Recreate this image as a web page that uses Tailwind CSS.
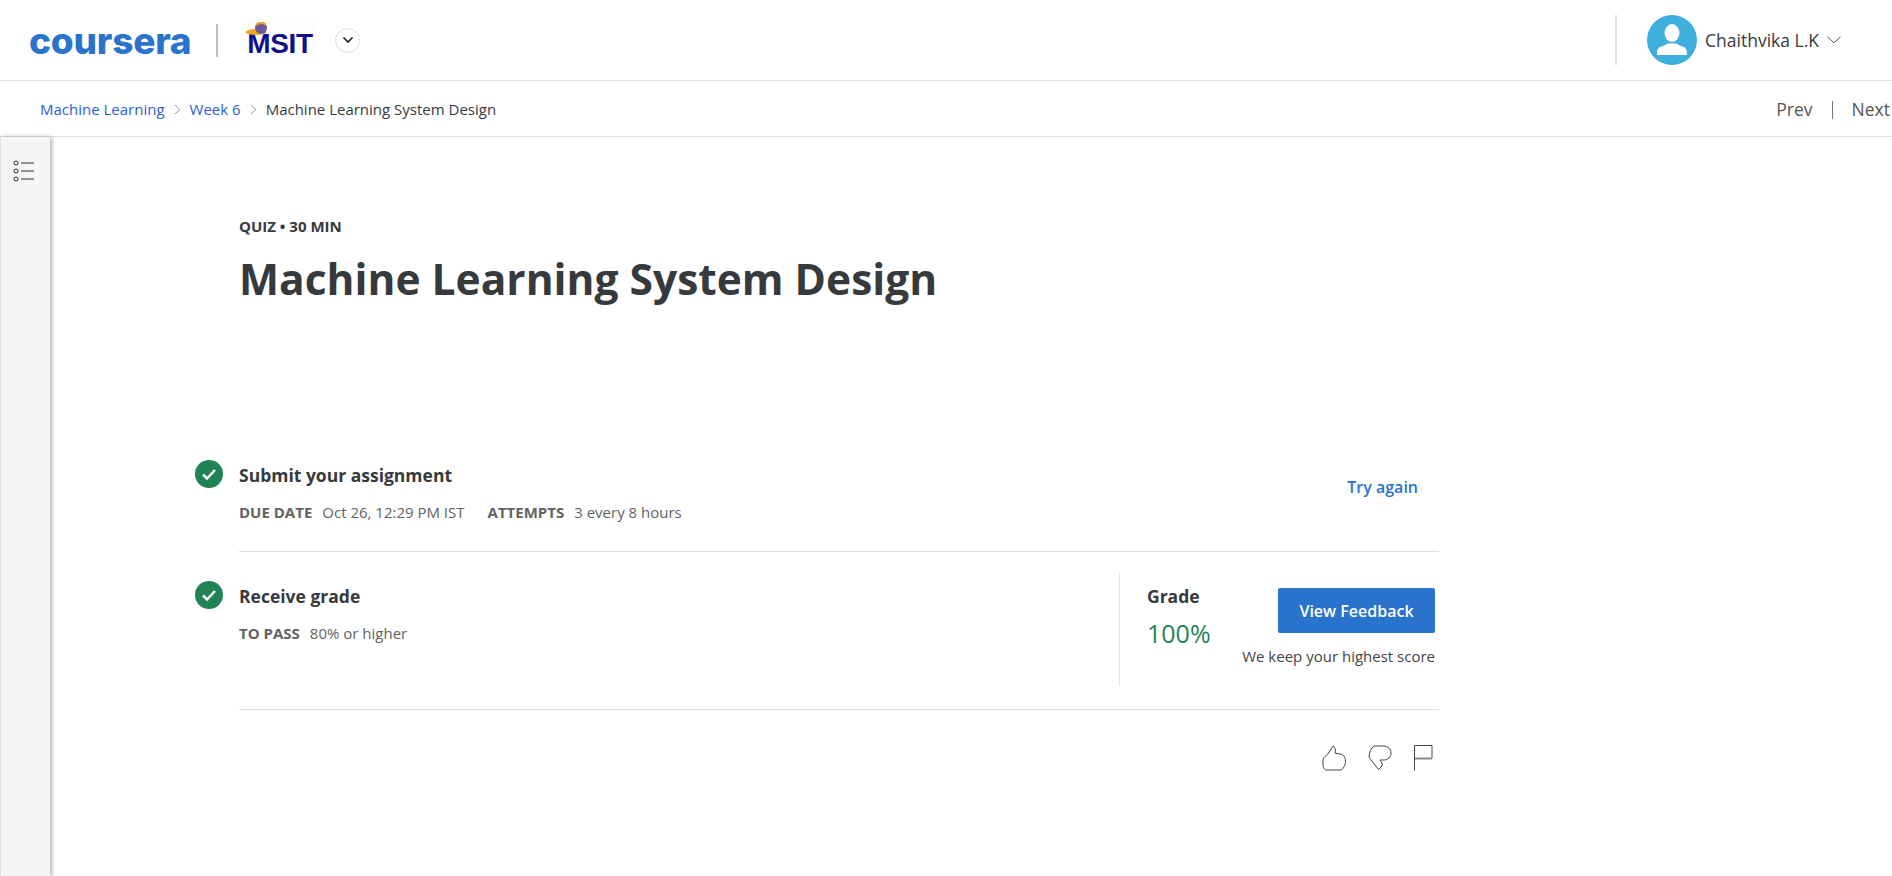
<!DOCTYPE html>
<html>
  <head>
    <meta charset="UTF-8" />
    <script src="https://cdn.jsdelivr.net/npm/@tailwindcss/browser@4"></script>
  </head>
  <body class="h-[876px] overflow-hidden bg-white font-['Open_Sans',sans-serif] text-[#373a3c]">
    <header class="h-[81px] border-b border-[#e1e1e1] flex items-center justify-between">
      <div class="flex items-center pl-[29px]">
        <span class="w-[161px] font-['Inter',sans-serif] font-extrabold text-[37px] leading-none tracking-[-0.2px] text-[#2a73cc]">coursera</span>
        <span class="ml-[26px] w-[2px] h-[33px] bg-[#bdbdbd]"></span>
        <div class="ml-[27px] w-[70px] h-[40px] relative flex items-end justify-center bg-[#fdfdfb]">
          <svg class="absolute left-0 top-[2px]" width="26" height="15" viewBox="0 0 26 15">
            <ellipse cx="11" cy="10" rx="10.500" ry="3" fill="#f0a81e" />
            <circle cx="16" cy="6" r="6" fill="#6b5a9a" />
            <path d="M11 3a7 7 0 0 1 10 0" stroke="#e8a020" stroke-width="2" fill="none" />
          </svg>
          <span class="font-['Liberation_Sans',sans-serif] font-bold text-[28px] leading-[28px] mb-[2px] tracking-[-0.3px] text-[#0f0f8c]">MSIT</span>
        </div>
        <button class="ml-[20px] w-[25px] h-[25px] rounded-full border border-[#dcdcdc] flex items-center justify-center">
          <svg width="12" height="8" viewBox="0 0 12 8" fill="none"><path d="M1.500 1.500 6 6l4.500-4.500" stroke="#1f1f1f" stroke-width="1.600" /></svg>
        </button>
      </div>
      <div class="flex items-center h-full">
        <span class="w-[2px] h-[50px] bg-[#dfdfdf]"></span>
        <span class="ml-[30px] w-[50px] h-[50px] rounded-full bg-[#3eaedb] overflow-hidden flex items-center justify-center">
          <svg width="50" height="50" viewBox="0 0 50 50" fill="#fff">
            <ellipse cx="25" cy="18" rx="7.500" ry="9" />
            <path d="M10 40c0-6 1-8 6-9l5-2.500h8l5 2.500c5 1 6 3 6 9z" />
          </svg>
        </span>
        <span class="ml-[8px] text-[17.5px] text-[#373a3c]">Chaithvika L.K</span>
        <svg class="ml-[8px] mr-[51px]" width="14" height="8" viewBox="0 0 14 8" fill="none"><path d="M.5.800 7 6.800 13.500.8" stroke="#555" /></svg>
      </div>
    </header>

    <nav class="h-[56px] border-b border-[#e1e1e1] flex items-center justify-between pl-[40px] pt-[2px] text-[15px]">
      <div class="flex items-center">
        <a class="text-[#2a5fdc]">Machine Learning</a>
        <svg class="mx-[9px]" width="7" height="11" viewBox="0 0 7 11" fill="none"><path d="M1 1l5 4.500L1 10" stroke="#999" /></svg>
        <a class="text-[#2a5fdc]">Week 6</a>
        <svg class="mx-[9px]" width="7" height="11" viewBox="0 0 7 11" fill="none"><path d="M1 1l5 4.500L1 10" stroke="#999" /></svg>
        <span>Machine Learning System Design</span>
      </div>
      <div class="flex items-center text-[17.5px] text-[#555] pr-[2px]">
        <span>Prev</span>
        <span class="mx-[19px] w-px h-[18px] bg-[#777]"></span>
        <span>Next</span>
      </div>
    </nav>

    <div class="flex h-[739px]">
      <aside class="w-[50px] shrink-0 bg-[#f5f5f5] border-l border-[#e1e1e1] shadow-[2px_0_4px_rgba(0,0,0,0.3)] pt-[23px] pl-[12px]">
        <svg width="22" height="22" viewBox="0 0 22 22" fill="none" stroke="#333">
          <circle cx="3" cy="3" r="2" /><circle cx="3" cy="11" r="2" /><circle cx="3" cy="19" r="2" />
          <path d="M8 3h13M8 11h13M8 19h13" />
        </svg>
      </aside>

      <main class="pl-[145px] pt-[79px] w-[1395px]">
        <div class="pl-[44px]">
          <div class="text-[15px] leading-[20px] font-bold text-[#373a3c]">QUIZ • 30 MIN</div>
          <h1 class="mt-[15px] text-[42.5px] leading-[56px] font-bold text-[#373a3c]">Machine Learning System Design</h1>
        </div>

        <section class="mt-[154px] flex">
          <svg class="mt-[-1px] shrink-0" width="28" height="28" viewBox="0 0 28 28"><circle cx="14" cy="14" r="14" fill="#1f8354" /><path d="M8 14.500l4 4 8-8.500" stroke="#fff" stroke-width="2.500" fill="none" /></svg>
          <div class="ml-[16px] w-[1200px] h-[91px] border-b border-[#dedede] flex justify-between">
            <div>
              <div class="text-[17.5px] leading-[28px] font-bold">Submit your assignment</div>
              <div class="mt-[13px] text-[15px] leading-[21px] text-[#636363] flex items-baseline">
                <b class="font-bold">DUE DATE</b><span class="ml-[10px]">Oct 26, 12:29 PM IST</span>
                <b class="ml-[23px] font-bold">ATTEMPTS</b><span class="ml-[10px]">3 every 8 hours</span>
              </div>
            </div>
            <a class="mt-[14px] mr-[21px] text-[16px] leading-[24px] font-semibold text-[#2a73cc]">Try again</a>
          </div>
        </section>

        <section class="mt-[30px] flex">
          <svg class="mt-[-1px] shrink-0" width="28" height="28" viewBox="0 0 28 28"><circle cx="14" cy="14" r="14" fill="#1f8354" /><path d="M8 14.500l4 4 8-8.500" stroke="#fff" stroke-width="2.500" fill="none" /></svg>
          <div class="ml-[16px] w-[1200px] h-[128px] border-b border-[#dedede] flex justify-between">
            <div>
              <div class="text-[17.5px] leading-[28px] font-bold">Receive grade</div>
              <div class="mt-[13px] text-[15px] leading-[21px] text-[#636363] flex items-baseline">
                <b class="font-bold">TO PASS</b><span class="ml-[10px]">80% or higher</span>
              </div>
            </div>
            <div class="w-[320px] h-[113px] mt-[-9px] border-l border-[#e1e1e1] pl-[27px] pr-[4px] flex justify-between">
              <div class="pt-[11px]">
                <div class="text-[17.5px] leading-[24px] font-bold">Grade</div>
                <div class="mt-[7px] text-[25px] leading-[36px] text-[#1f8354]">100%</div>
              </div>
              <div class="pt-[15px] flex flex-col items-end">
                <button class="w-[157px] h-[45px] rounded-[2px] bg-[#2a73cc] text-white text-[16px] font-semibold">View Feedback</button>
                <div class="mt-[13px] text-[15px] leading-[20px] whitespace-nowrap text-[#444]">We keep your highest score</div>
              </div>
            </div>
          </div>
        </section>

        <div class="ml-[1127px] mt-[35px] flex items-start gap-[22px] w-[110px]">
          <svg class="shrink-0" width="24" height="26" viewBox="0 0 24 26" fill="none" stroke="#444">
            <path d="M5 25H18C21 25 23.500 20 23.500 16C23.500 12 21 9 18 9L13 8C14 5 13 2 11 1L6 9C4 11 1 12 1 15V19C1 22 2 25 5 25z" />
          </svg>
          <svg class="shrink-0" width="24" height="26" viewBox="0 0 24 26" fill="none" stroke="#444">
            <path d="M6 1H15C20 1 23 4 23 8C23 12 20 15 16 15H12C13 17 15 19 14 21L10.500 24.500C7 20 3 15 1 12C1 8 3 3 6 1z" />
          </svg>
          <svg class="shrink-0" width="19" height="26" viewBox="0 0 19 26" fill="none">
            <path d="M.5 25.500V.500H18V13" stroke="#444" />
            <path d="M1 13.500H18" stroke="#888" stroke-width="2" />
          </svg>
        </div>
      </main>
    </div>
  </body>
</html>
